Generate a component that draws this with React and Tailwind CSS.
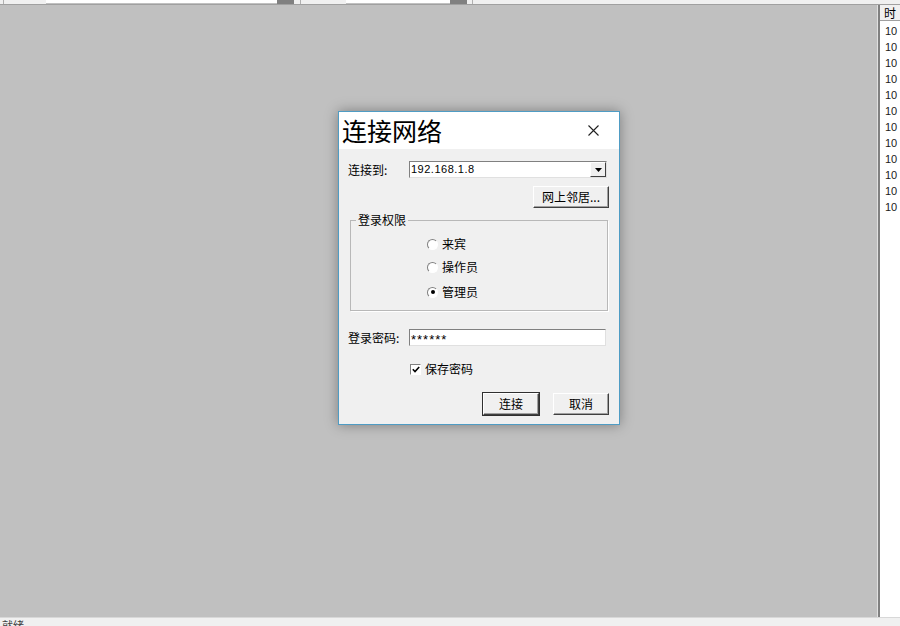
import React from "react";

const font = { fontFamily: '"Noto Sans CJK SC", "Liberation Sans", sans-serif' };

function Btn({ children, w, def }) {
  return (
    <div
      className={`flex h-[22px] items-center justify-center bg-[#f0f0f0] text-[12px] text-black border border-t-white border-l-white border-b-[#404040] border-r-[#404040] ${def ? "outline outline-1 outline-[#303030]" : ""} shadow-[inset_-1px_-1px_0_#a0a0a0]`}
      style={{ width: w }}
    >
      {children}
    </div>
  );
}

function Radio({ label, checked }) {
  return (
    <div className="flex items-center h-[14px]">
      <div className="w-[11px] h-[11px] rounded-full border border-t-[#808080] border-l-[#808080] border-b-white border-r-white bg-white flex items-center justify-center">
        {checked && <div className="w-[4px] h-[4px] rounded-full bg-black" />}
      </div>
      <span className="ml-[4px] text-[12px] leading-none text-black">{label}</span>
    </div>
  );
}

export default function App() {
  const rows = Array.from({ length: 12 });
  return (
    <div className="w-[900px] h-[626px] flex flex-col overflow-hidden bg-[#f0f0f0]" style={font}>
      {/* top toolbar (clipped) */}
      <div className="h-[5px] shrink-0 relative bg-[#f0f0f0] border-b border-[#a0a0a0] overflow-hidden flex items-end">
        <div className="ml-[3px] w-[4px] h-[4px] border-l border-[#b0b0b0]" />
        <div className="ml-[39px] w-[248px] h-[4px] bg-white border-b border-[#c0c0c0] flex justify-end">
          <div className="w-[17px] h-[4px] bg-[#808080]" />
        </div>
        <div className="ml-[6px] w-[4px] h-[4px] border-l border-[#b0b0b0]" />
        <div className="ml-[42px] w-[121px] h-[4px] bg-white border-b border-[#c0c0c0] flex justify-end">
          <div className="w-[17px] h-[4px] bg-[#808080]" />
        </div>
        <div className="ml-[5px] w-[4px] h-[4px] border-l border-[#b0b0b0]" />
      </div>
      <div className="flex flex-1 min-h-0">
        {/* main gray area */}
        <div className="flex-1 relative bg-[#c0c0c0] border-r border-[#e0e0e0]">
          {/* dialog */}
          <div className="absolute left-[338px] top-[106px] w-[282px] h-[314px] border border-[#4f9cc4] bg-[#f0f0f0] shadow-[0_0_12px_rgba(0,0,0,0.35)] flex flex-col">
            <div className="h-[37px] bg-white flex items-center justify-between pl-[3px] pr-[20px] shrink-0">
              <span className="text-[25px] leading-none text-black">连接网络</span>
              <svg width="11" height="11" viewBox="0 0 11 11">
                <path d="M0.5 0.5 L10.5 10.5 M10.5 0.5 L0.5 10.5" stroke="#202020" strokeWidth="1.1" />
              </svg>
            </div>
            <div className="flex flex-col pl-[9px] pr-[10px]">
              <div className="mt-[12px] flex items-center h-[17px]">
                <span className="w-[61px] text-[12px] text-black leading-none">连接到:</span>
                <div className="w-[198px] h-[17px] bg-white border border-t-[#808080] border-l-[#808080] border-b-[#e0e0e0] border-r-[#e0e0e0] flex items-center justify-between">
                  <span className="ml-[1px] text-[11px] leading-none tracking-[0.5px] text-black" style={{ fontFamily: '"Liberation Sans", sans-serif' }}>192.168.1.8</span>
                  <div className="w-[16px] h-[15px] bg-[#f0f0f0] border border-t-white border-l-white border-b-[#404040] border-r-[#404040] flex items-center justify-center">
                    <svg width="7" height="4" viewBox="0 0 7 4"><path d="M0 0 H7 L3.5 4 Z" fill="#000" /></svg>
                  </div>
                </div>
              </div>
              <div className="mt-[8px] flex justify-end">
                <Btn w="76px">网上邻居...</Btn>
              </div>
              <div className="mt-[12px] ml-[2px] relative w-[258px] h-[91px] border border-[#b8b8b8] shadow-[1px_1px_0_white]">
                <span className="absolute left-[5px] top-[-8px] px-[2px] bg-[#f0f0f0] text-[12px] leading-[14px] text-black">登录权限</span>
                <div className="absolute left-[76px] top-[16px]"><Radio label="来宾" /></div>
                <div className="absolute left-[76px] top-[39px]"><Radio label="操作员" /></div>
                <div className="absolute left-[76px] top-[64px]"><Radio label="管理员" checked /></div>
              </div>
              <div className="mt-[18px] flex items-center h-[17px]">
                <span className="w-[61px] text-[12px] text-black leading-none">登录密码:</span>
                <div className="w-[197px] h-[17px] bg-white border border-t-[#808080] border-l-[#808080] border-b-[#e0e0e0] border-r-[#e0e0e0] flex items-center">
                  <span className="ml-[1px] text-[13px] leading-none tracking-[1px] text-black pt-[3px]" style={{ fontFamily: '"Liberation Sans", sans-serif' }}>******</span>
                </div>
              </div>
              <div className="mt-[16px] ml-[62px] flex items-center h-[14px]">
                <div className="w-[11px] h-[11px] bg-white border border-t-[#808080] border-l-[#808080] border-b-white border-r-white flex items-center justify-center">
                  <svg width="8" height="7" viewBox="0 0 8 7"><path d="M0.8 3.3 L3 5.5 L7.2 1" stroke="#000" strokeWidth="1.6" fill="none" /></svg>
                </div>
                <span className="ml-[4px] text-[12px] leading-none text-black">保存密码</span>
              </div>
              <div className="mt-[17px] flex justify-end gap-[14px]">
                <Btn w="56px" def>连接</Btn>
                <Btn w="56px">取消</Btn>
              </div>
            </div>
          </div>
        </div>
        {/* right list */}
        <div className="w-[22px] shrink-0 bg-white border-l-2 border-[#808080] flex flex-col">
          <div className="h-[16px] bg-[#f0f0f0] border-b border-[#a0a0a0] pl-[4px] text-[12px] leading-[16px] text-black overflow-hidden">时</div>
          <div className="flex flex-col pt-[2px]">
            {rows.map((_, i) => (
              <div key={i} className="h-[16px] pl-[5px] text-[11px] leading-[16px] text-[#202020]" style={{ fontFamily: '"Liberation Sans", sans-serif' }}>10</div>
            ))}
          </div>
        </div>
      </div>
      {/* status bar */}
      <div className="h-[9px] shrink-0 bg-[#f0f0f0] border-t border-[#d8d8d8] overflow-hidden">
        <div className="pl-[2px] text-[11px] leading-[14px] text-[#404040]">就绪</div>
      </div>
    </div>
  );
}
